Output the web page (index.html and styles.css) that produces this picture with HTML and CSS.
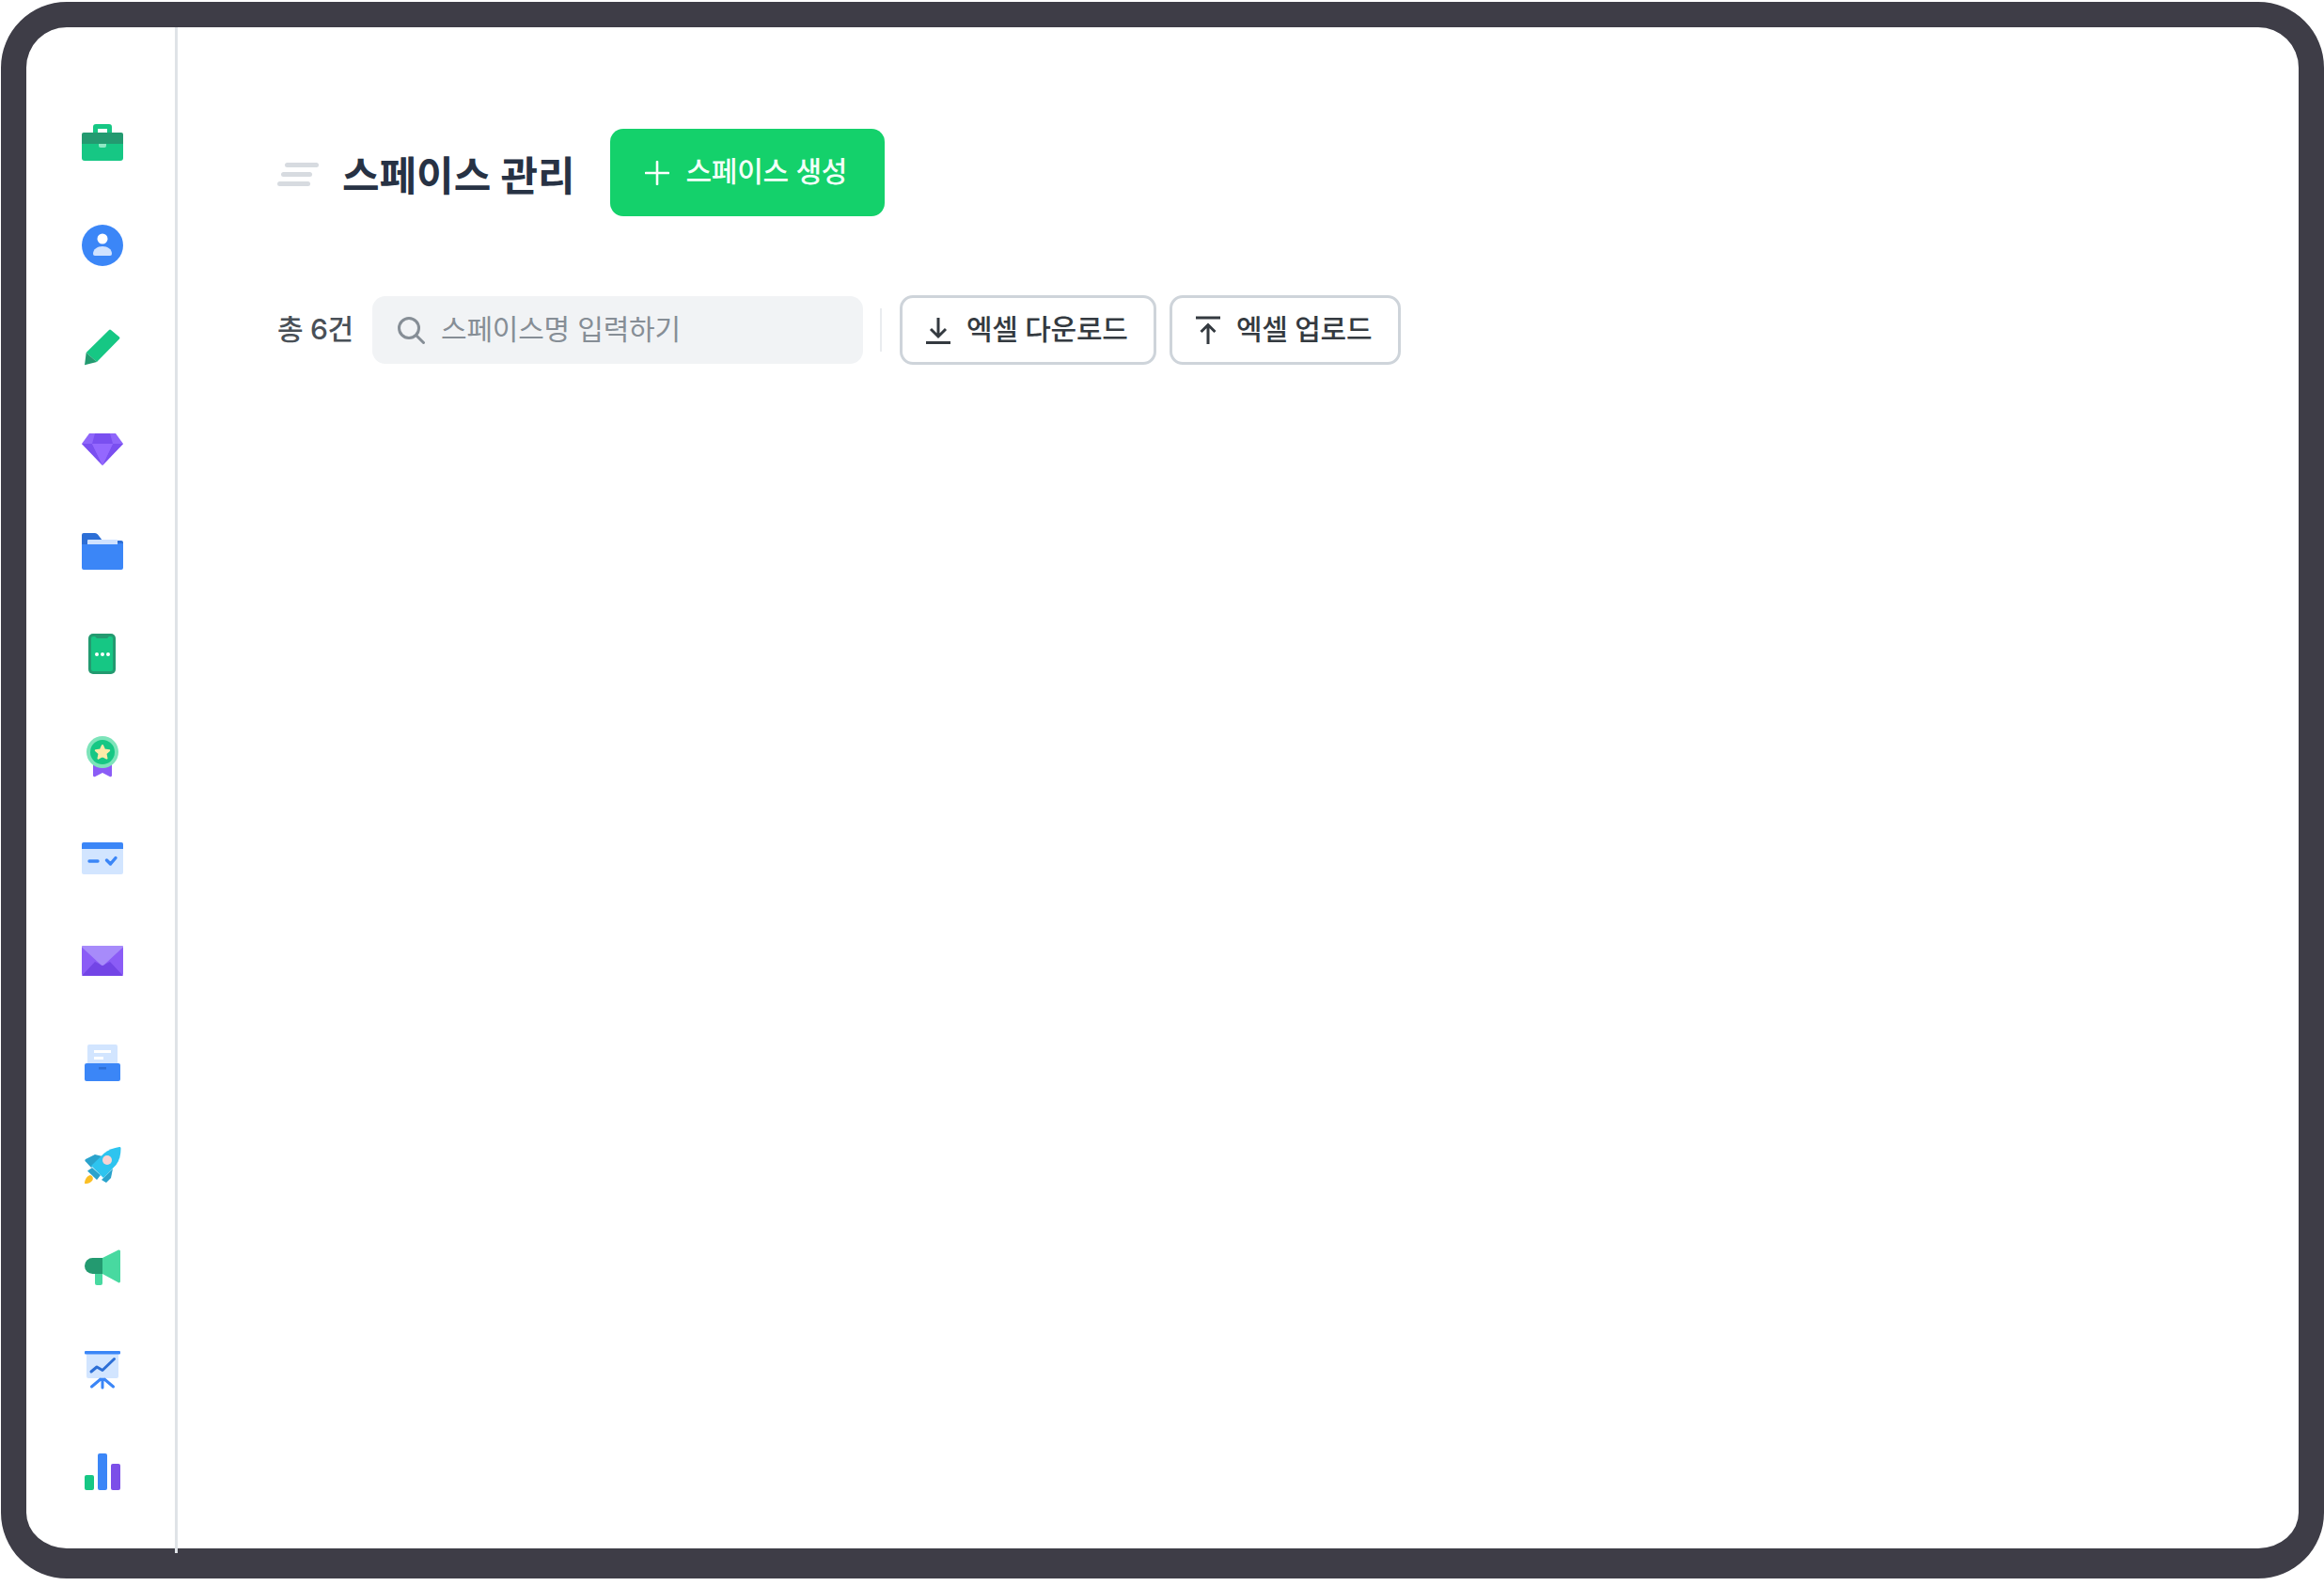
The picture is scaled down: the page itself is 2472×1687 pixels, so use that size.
FILE: index.html
```html
<!DOCTYPE html>
<html lang="ko">
<head>
    <meta charset="UTF-8">
    <title>스페이스 관리</title>
    <link rel="stylesheet" href="styles.css">
</head>
<body>
    <div class="frame">
        <nav class="sidebar">
            <!-- briefcase -->
            <svg class="nav-icon" viewBox="0 0 44 44">
                <path fill="#16c784" fill-rule="evenodd" d="M15 2h14a3 3 0 0 1 3 3v7H12V5a3 3 0 0 1 3-3zm2 5v5h10V7z"/>
                <path fill="#16c784" d="M0 20h44v18a3 3 0 0 1-3 3H3a3 3 0 0 1-3-3z"/>
                <path fill="#239a70" d="M2 11h40a2 2 0 0 1 2 2v10H0V13a2 2 0 0 1 2-2z"/>
                <path fill="#8fe8c4" d="M18 23h8v2a2 2 0 0 1-2 2h-4a2 2 0 0 1-2-2z"/>
            </svg>
            <!-- person -->
            <svg class="nav-icon" viewBox="0 0 44 44">
                <circle cx="22" cy="22" r="22" fill="#3b86f7"/>
                <circle cx="22" cy="15" r="5.5" fill="#fff"/>
                <path fill="#cfe2ff" d="M12 31c0-5 4.500-8 10-8s10 3 10 8a2 2 0 0 1-2 2H14a2 2 0 0 1-2-2z"/>
            </svg>
            <!-- pencil -->
            <svg class="nav-icon" viewBox="0 0 44 44">
                <path fill="#16c784" d="M29 3a1.500 1.500 0 0 1 2 0l9 7.500a1.500 1.500 0 0 1 0 2L16 37 4.700 27z"/>
                <path fill="#239a70" d="M4.700 27 16 37l-13 3.300z"/>
            </svg>
            <!-- gem -->
            <svg class="nav-icon" viewBox="0 0 44 44">
                <path fill="#8f66fa" d="M8 4h28l8 11-22 23L0 15z"/>
                <path fill="#7a4ff0" d="M14 4h16l3 11H11z"/>
                <path fill="#7a4ff0" d="M0 15h11l11 23z"/>
                <path fill="#7a4ff0" d="M44 15H33L22 38z"/>
                <path fill="#9468ff" d="M11 15h22L22 38z"/>
            </svg>
            <!-- folder -->
            <svg class="nav-icon" viewBox="0 0 44 44">
                <path fill="#2d6fd6" d="M2 1h12a4 4 0 0 1 3 1.500L22 9h20a2 2 0 0 1 2 2v6H0V3a2 2 0 0 1 2-2z"/>
                <rect x="6" y="8" width="32" height="8" rx="1" fill="#cfe2ff"/>
                <path fill="#3b86f7" d="M0 13h38v-1h6v26a2 2 0 0 1-2 2H2a2 2 0 0 1-2-2z"/>
            </svg>
            <!-- phone -->
            <svg class="nav-icon" viewBox="0 0 44 44">
                <rect x="7" y="-1" width="29" height="43" rx="5" fill="#239a70"/>
                <path fill="#16c784" d="M12 2h2l2 2h11l2-2h2a2 2 0 0 1 2 2v33a2 2 0 0 1-2 2H12a2 2 0 0 1-2-2V4a2 2 0 0 1 2-2z"/>
                <circle cx="16" cy="21" r="2" fill="#fff"/>
                <circle cx="22" cy="21" r="2" fill="#fff"/>
                <circle cx="28" cy="21" r="2" fill="#fff"/>
            </svg>
            <!-- medal -->
            <svg class="nav-icon" viewBox="0 0 44 44">
                <path fill="#8b5cf6" d="M12 27h20v14a1.500 1.500 0 0 1-2.300 1L22 38l-7.700 4a1.500 1.500 0 0 1-2.300-1z"/>
                <circle cx="22" cy="16" r="17" fill="#7de4ba"/>
                <circle cx="22" cy="16" r="13" fill="#16c784"/>
                <path fill="#fdeaa8" stroke="#fdeaa8" stroke-width="2" stroke-linejoin="round" d="M22 9l2.200 4.600 5 .6-3.700 3.400 1 5L22 20.100 17.500 22.600l1-5-3.700-3.400 5-.6z"/>
            </svg>
            <!-- schedule card -->
            <svg class="nav-icon" viewBox="0 0 44 44">
                <rect y="3" width="44" height="34" rx="2" fill="#d2e5ff"/>
                <path fill="#3b86f7" d="M2 3h40a2 2 0 0 1 2 2v5H0V5a2 2 0 0 1 2-2z"/>
                <path fill="none" stroke="#3b86f7" stroke-width="3.400" stroke-linecap="round" stroke-linejoin="round" d="M8 23h9M26.500 22l4 4 5.500-6.500"/>
            </svg>
            <!-- envelope -->
            <svg class="nav-icon" viewBox="0 0 44 44">
                <rect y="4" width="44" height="32" rx="2" fill="#8b5cf6"/>
                <path fill="#7345e6" d="M0 36l14-15 8 4 8-4 14 15z"/>
                <path fill="#a78bfa" d="M1 4h42a1 1 0 0 1 .7 1.700L24 24a3 3 0 0 1-4 0L.3 5.700A1 1 0 0 1 1 4z"/>
            </svg>
            <!-- inbox -->
            <svg class="nav-icon" viewBox="0 0 44 44">
                <path fill="#d2e5ff" d="M8 0h28a2 2 0 0 1 2 2v20H6V2a2 2 0 0 1 2-2z"/>
                <rect x="13" y="6" width="18" height="3" fill="#fff"/>
                <rect x="13" y="13" width="10" height="3" fill="#fff"/>
                <rect x="3" y="20" width="38" height="19" rx="2" fill="#3b86f7"/>
                <rect x="18" y="24" width="8" height="2.500" fill="#2d6fd6"/>
            </svg>
            <!-- rocket -->
            <svg class="nav-icon" viewBox="0 0 44 44">
                <path fill="#2aa3cc" d="M4 13l10-5 8 2-12 12-5.500-6a2 2 0 0 1-.5-3z"/>
                <path fill="#2aa3cc" d="M33 23l-2 10-5 5-5-3z"/>
                <path fill="#2aa3cc" d="M11 22l9 8-4 5-10-9.500z"/>
                <path fill="#2ec4ef" d="M40 0c1 0 1.500.500 1.500 1.500 0 7-1.500 13-5 17.500L23 33 10 20 24 6.500C28 3 34 1 40 0z"/>
                <circle cx="27" cy="14" r="5" fill="#f8d3d3"/>
                <path fill="#fbbf24" d="M3 39c0-4 2-8 6-9 3 1 3.500 4 2 6-2 2.500-5 3-8 3z"/>
            </svg>
            <!-- megaphone -->
            <svg class="nav-icon" viewBox="0 0 44 44">
                <path fill="#48d9a0" d="M14 24h8v12a2 2 0 0 1-2 2h-4a2 2 0 0 1-2-2z"/>
                <path fill="#48d9a0" d="M22 9L39 .500a1.500 1.500 0 0 1 2 1.500v32a1.500 1.500 0 0 1-2 1.300L22 26z"/>
                <path fill="#239a70" d="M11.500 9H22v17H11.500a8.500 8.500 0 0 1 0-17z"/>
            </svg>
            <!-- presentation -->
            <svg class="nav-icon" viewBox="0 0 44 44">
                <path fill="#d2e5ff" d="M5 2h34v24a2 2 0 0 1-2 2H7a2 2 0 0 1-2-2z"/>
                <rect x="3" y="-1" width="38" height="3.500" rx="1" fill="#3b86f7"/>
                <path fill="none" stroke="#2d6fd6" stroke-width="3" stroke-linecap="round" stroke-linejoin="round" d="M10 21l6-5 6 3.500L34.500 7.500"/>
                <path fill="none" stroke="#3b86f7" stroke-width="3" stroke-linecap="round" d="M22 29v9M20 29l-9.500 8M24 29l9.500 8"/>
            </svg>
            <!-- bars -->
            <svg class="nav-icon" viewBox="0 0 44 44">
                <rect x="3" y="22" width="10" height="16" rx="2" fill="#16c784"/>
                <rect x="17" y="-1" width="10" height="39" rx="2" fill="#3b86f7"/>
                <rect x="31" y="10" width="10" height="28" rx="2" fill="#7c4fe8"/>
            </svg>
        </nav>

        <main class="content">
            <div class="page-head">
                <svg class="menu-icon" viewBox="0 0 44 26">
                    <rect x="8" y="0" width="36" height="5" rx="2.500" fill="#d7dbe0"/>
                    <rect x="4" y="10" width="33" height="5" rx="2.500" fill="#d7dbe0"/>
                    <rect x="0" y="20" width="35" height="5" rx="2.500" fill="#d7dbe0"/>
                </svg>
                <h1 class="page-title">스페이스 관리</h1>
                <button class="create-btn">
                    <svg viewBox="0 0 26 26" class="plus-icon">
                        <path fill="none" stroke="#fff" stroke-width="2.600" stroke-linecap="round" d="M13 1v24M1 13h24"/>
                    </svg>
                    <span>스페이스 생성</span>
                </button>
            </div>

            <div class="toolbar">
                <span class="total">총 6건</span>
                <div class="search-box">
                    <svg viewBox="0 0 30 30" class="search-icon">
                        <circle cx="13" cy="13" r="10.500" fill="none" stroke="#868e96" stroke-width="3"/>
                        <path fill="none" stroke="#868e96" stroke-width="3" stroke-linecap="round" d="M21 21l7.500 7.500"/>
                    </svg>
                    <span class="search-text">스페이스명 입력하기</span>
                </div>
                <div class="divider"></div>
                <button class="outline-btn dl-btn">
                    <svg viewBox="0 0 26 30" class="excel-icon">
                        <path fill="none" stroke="#343a40" stroke-width="3" d="M13 2v19M5 14l8 8 8-8M0 28.500h26"/>
                    </svg>
                    <span>엑셀 다운로드</span>
                </button>
                <button class="outline-btn ul-btn">
                    <svg viewBox="0 0 26 30" class="excel-icon">
                        <path fill="none" stroke="#343a40" stroke-width="3" d="M0 2h26M13 30V11M5.500 17l7.500-7.500 7.500 7.500"/>
                    </svg>
                    <span>엑셀 업로드</span>
                </button>
            </div>
        </main>
    </div>
</body>
</html>
```

FILE: styles.css
```css
body {
    margin: 0;
    background: #ffffff;
    font-family: Inter, "Noto Sans CJK KR", sans-serif;
}

.frame {
    box-sizing: border-box;
    display: flex;
    width: 2471px;
    height: 1677px;
    margin: 2px 0 0 1px;
    border: 27px solid #3e3d47;
    border-bottom-width: 32px;
    border-radius: 70px;
    background: #ffffff;
}

.sidebar {
    position: relative;
    box-sizing: border-box;
    display: flex;
    flex-direction: column;
    align-items: center;
    gap: 65px;
    width: 161px;
    padding: 101px 0 0 4px;
    border-right: 3px solid #dfe3e7;
}

/* the rule runs a little past the frame edge */
.sidebar::after {
    content: "";
    position: absolute;
    right: -3px;
    bottom: -5px;
    width: 3px;
    height: 5px;
    background: #dfe3e7;
}

.nav-icon {
    flex: none;
    width: 44px;
    height: 44px;
    overflow: visible;
}

.content {
    flex: 1;
    padding: 108px 0 0 106px;
}

.page-head {
    display: flex;
    align-items: center;
    height: 93px;
}

.menu-icon {
    width: 44px;
    height: 26px;
    margin: 4px 25px 0 0;
}

.page-title {
    margin: 1px 37px 0 0;
    font-size: 43px;
    font-weight: 700;
    color: #273244;
}

.create-btn {
    display: flex;
    align-items: center;
    gap: 18px;
    box-sizing: border-box;
    width: 292px;
    height: 93px;
    padding: 0 0 0 37px;
    border: none;
    border-radius: 14px;
    background: #14d16b;
    color: #f2fff8;
    font-family: inherit;
    font-size: 30px;
    font-weight: 500;
    letter-spacing: -0.3px;
}

.create-btn span {
    padding-bottom: 7px;
}

.plus-icon {
    width: 26px;
    height: 26px;
}

.toolbar {
    display: flex;
    align-items: center;
    margin-top: 84px;
    height: 74px;
}

.total {
    width: 101px;
    padding-bottom: 6px;
    font-size: 30px;
    font-weight: 500;
    letter-spacing: -0.3px;
    color: #495057;
}

.search-box {
    display: flex;
    align-items: center;
    gap: 17px;
    box-sizing: border-box;
    width: 522px;
    height: 72px;
    padding-left: 26px;
    border-radius: 14px;
    background: #f1f3f5;
}

.search-icon {
    width: 30px;
    height: 30px;
}

.search-text {
    padding-bottom: 6px;
    font-size: 30px;
    letter-spacing: -0.2px;
    color: #868e96;
}

.divider {
    width: 2px;
    height: 46px;
    margin: 0 19px 0 18px;
    background: #e9ecef;
}

.outline-btn {
    display: flex;
    align-items: center;
    gap: 17px;
    box-sizing: border-box;
    height: 74px;
    padding: 0 0 0 25px;
    border: 3px solid #ced4da;
    border-radius: 14px;
    background: #ffffff;
    color: #343a40;
    font-family: inherit;
    font-size: 30px;
    font-weight: 500;
    letter-spacing: -0.3px;
}

.outline-btn span {
    padding-bottom: 6px;
}

.dl-btn {
    width: 273px;
}

.ul-btn {
    width: 246px;
    margin-left: 14px;
}

.excel-icon {
    width: 26px;
    height: 30px;
}
```
